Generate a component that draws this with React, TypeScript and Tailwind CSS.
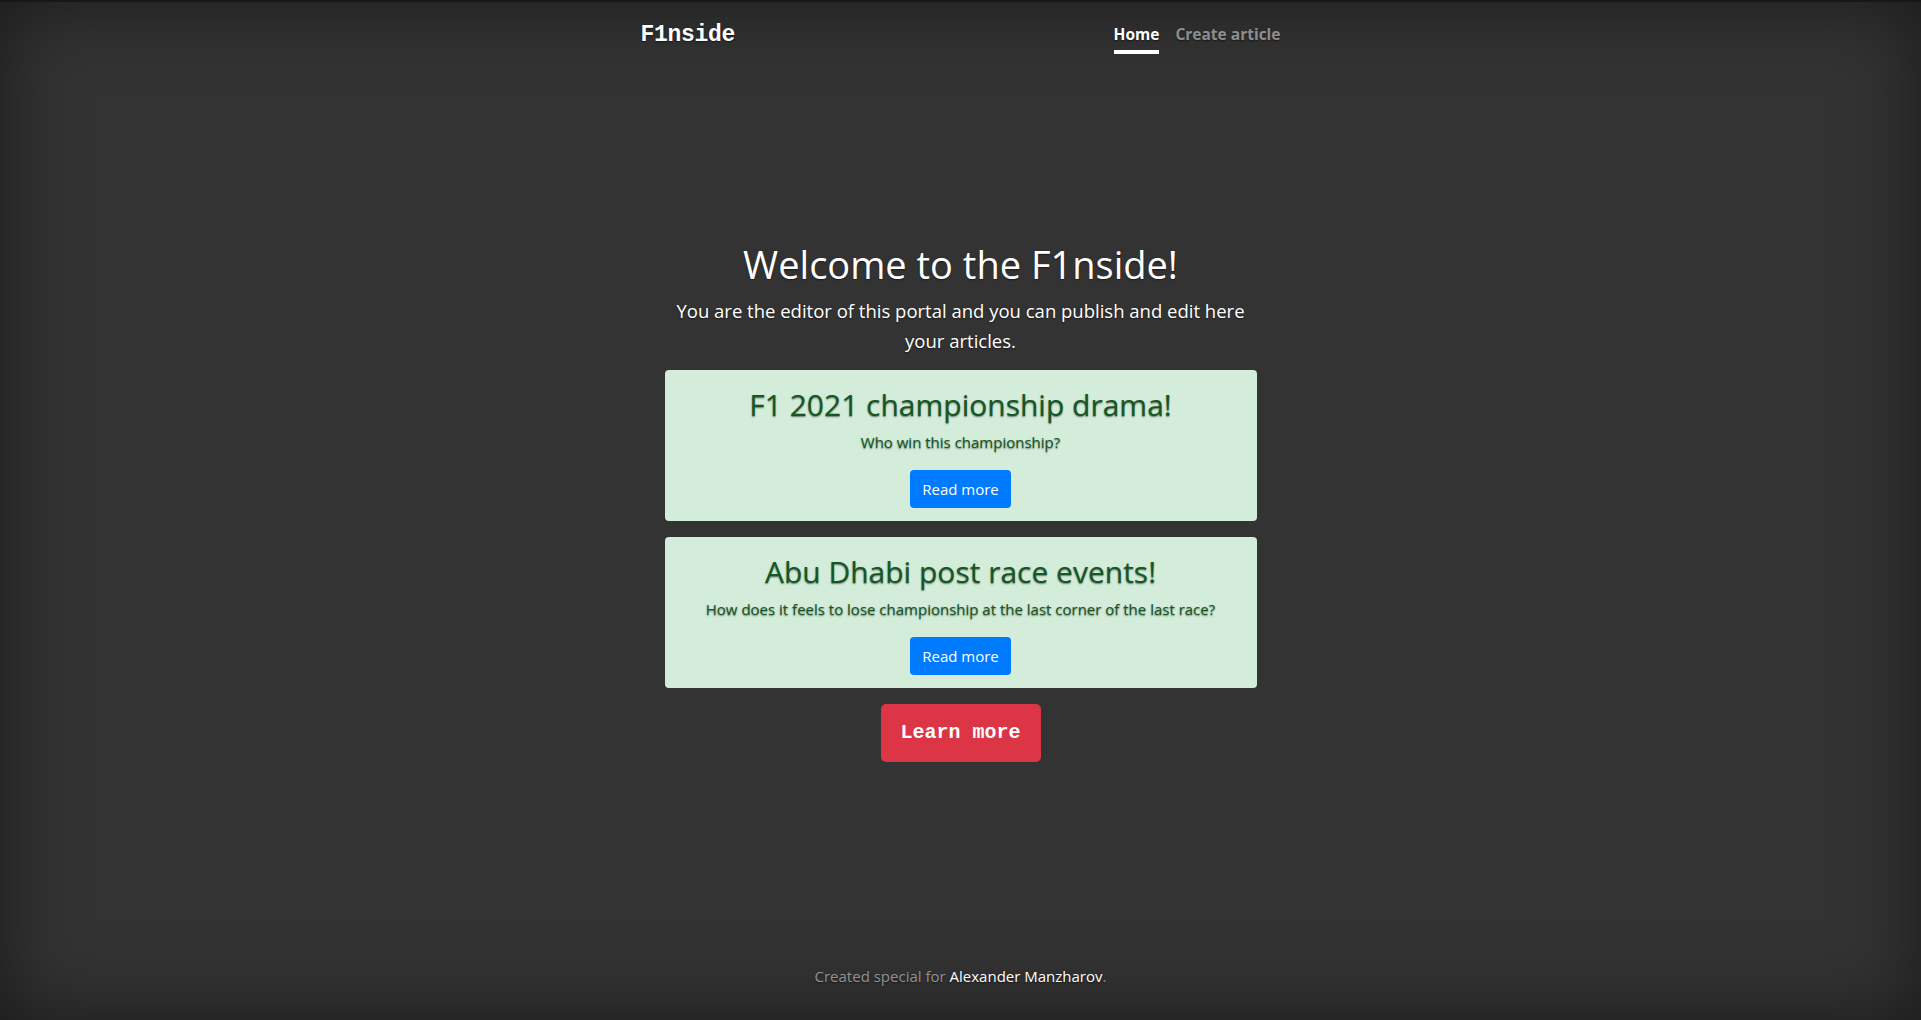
const articles = [
  {
    title: "F1 2021 championship drama!",
    text: "Who win this championship?",
  },
  {
    title: "Abu Dhabi post race events!",
    text: "How does it feels to lose championship at the last corner of the last race?",
  },
];

const sans = "font-['Open_Sans','Noto_Sans',sans-serif]";
const shadow = "[text-shadow:0_0.05rem_0.1rem_rgba(0,0,0,0.5)]";

const Header = () => (
  <header className="w-[640px] mx-auto pt-4 flex justify-between items-start">
    <h3 className="font-['Liberation_Mono',monospace] font-bold text-[23px] leading-[34px] text-white tracking-[-0.3px]">
      F1nside
    </h3>
    <nav className={`flex ${sans}`}>
      <a className="py-1 text-white font-bold text-[15.5px] leading-6 border-b-4 border-white">
        Home
      </a>
      <a className="py-1 ml-4 text-white/50 font-bold text-[15.5px] leading-6 border-b-4 border-transparent">
        Create article
      </a>
    </nav>
  </header>
);

const ArticleCard = ({ title, text }: { title: string; text: string }) => (
  <div className="bg-[#d4edda] text-[#155724] rounded-[4px] pt-4 pb-[13px] px-4 flex flex-col items-center text-center">
    <h2 className="text-[30px] leading-[38px] mb-[6px]">{title}</h2>
    <p className="text-[15px] leading-6 mb-4">{text}</p>
    <button className="bg-[#007bff] text-white rounded-[4px] px-3 py-[7px] text-[15px] leading-6 [text-shadow:none]">
      Read more
    </button>
  </div>
);

export default function App() {
  return (
    <div
      className={`h-screen w-full bg-[#333] border-t-2 border-[#171717] shadow-[inset_0_0_5rem_rgba(0,0,0,0.5)] flex flex-col text-white ${sans} ${shadow}`}
    >
      <Header />

      <main className="w-[640px] mx-auto px-6 mt-[186px] flex flex-col items-center text-center">
        <h1 className="text-[38px] leading-[48px] mb-2">Welcome to the F1nside!</h1>
        <p className="text-[18.5px] leading-[30px] mb-[14px] px-1">
          You are the editor of this portal and you can publish and edit here your articles.
        </p>
        <div className="w-full flex flex-col gap-4">
          {articles.map((a) => (
            <ArticleCard key={a.title} title={a.title} text={a.text} />
          ))}
        </div>
        <button className="mt-4 w-[160px] h-[58px] bg-[#dc3545] rounded-[5px] text-white font-bold text-[20px] font-['Liberation_Mono',monospace]">
          Learn more
        </button>
      </main>

      <footer className="mt-auto pb-8 text-center text-[15px] leading-6">
        <p className="text-white/50">
          Created special for <a className="text-white">Alexander Manzharov</a>.
        </p>
      </footer>
    </div>
  );
}
